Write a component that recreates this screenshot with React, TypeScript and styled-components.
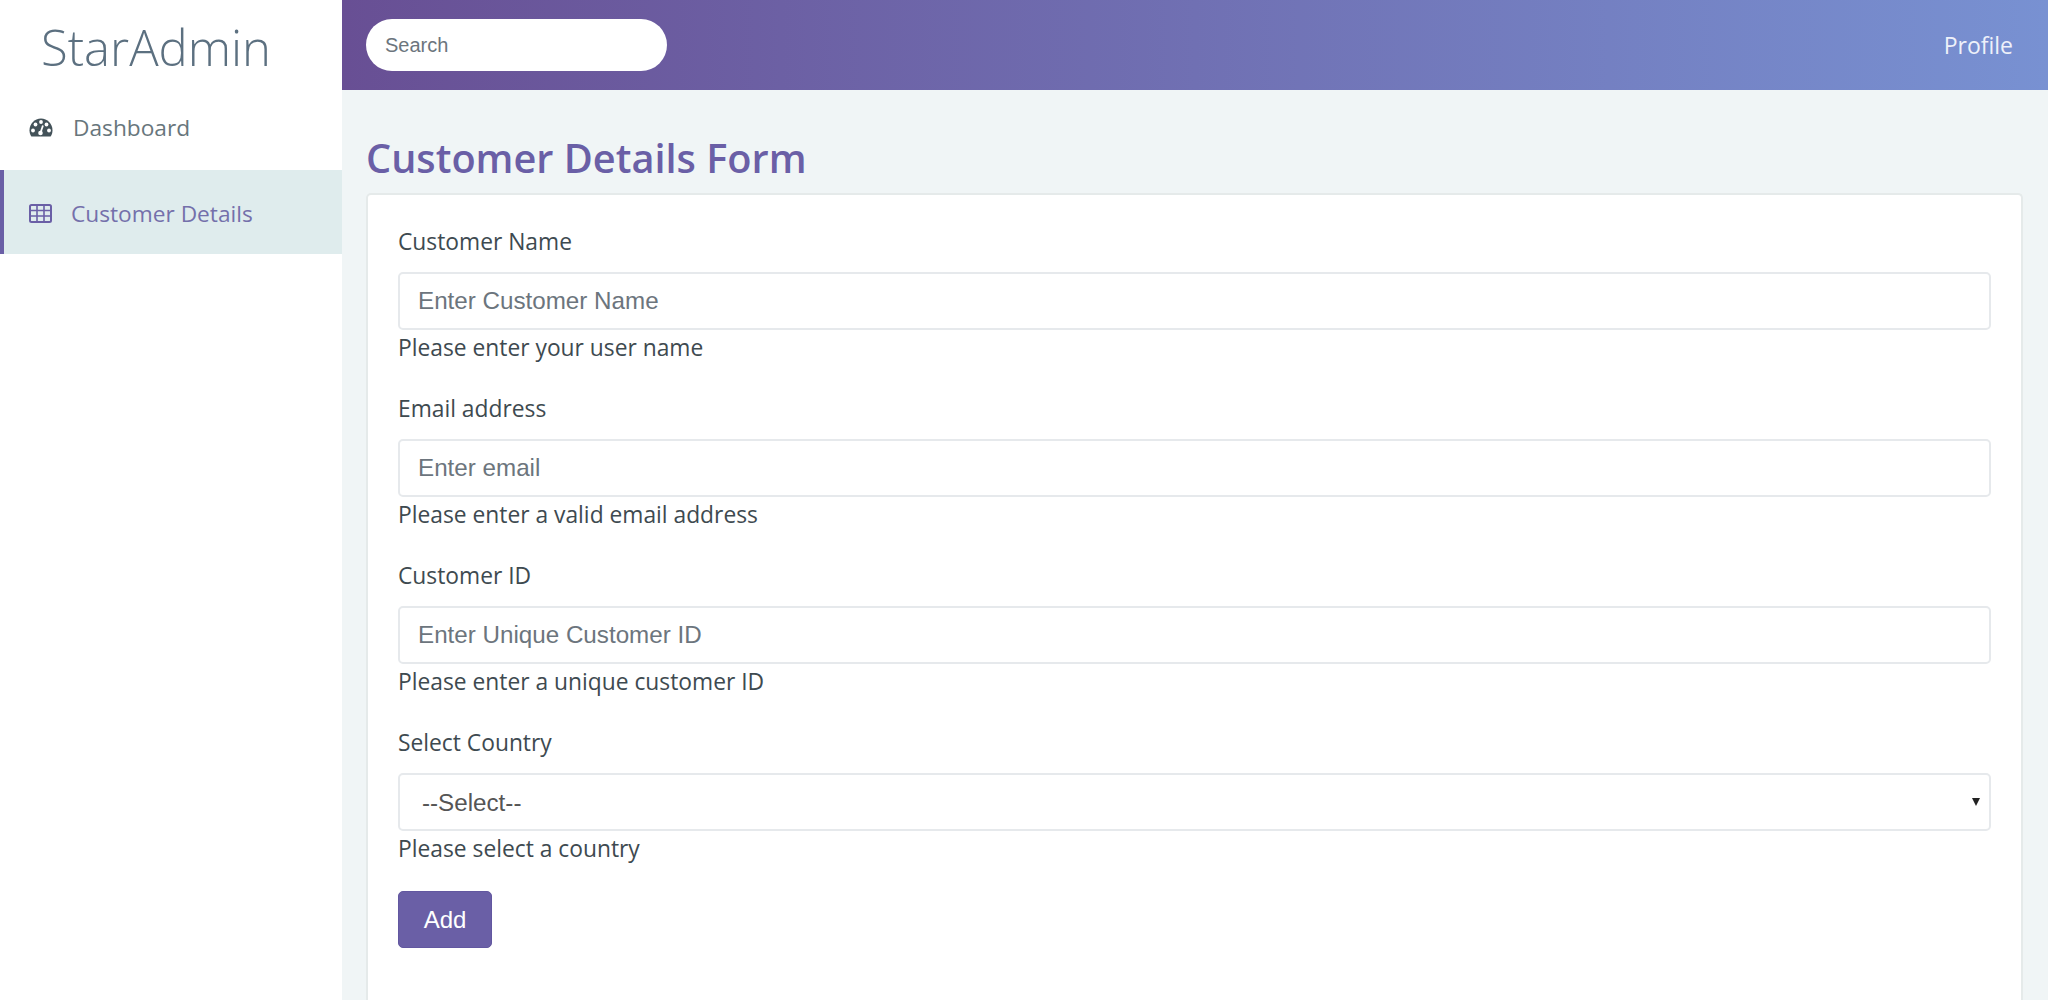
import styled, { createGlobalStyle } from 'styled-components';

const purple = '#6a5fa6';

const fields = [
    { label: 'Customer Name', placeholder: 'Enter Customer Name', help: 'Please enter your user name' },
    { label: 'Email address', placeholder: 'Enter email', help: 'Please enter a valid email address' },
    { label: 'Customer ID', placeholder: 'Enter Unique Customer ID', help: 'Please enter a unique customer ID' },
];

function GaugeIcon() {
    return (
        <svg width="24" height="19" viewBox="0 0 24 19">
            <path
                d="M12 0.5C5.6 0.5 0.5 5.7 0.5 12.2c0 2.4 0.7 4.6 1.9 6.3h19.2c1.2-1.7 1.9-3.9 1.9-6.3C23.5 5.7 18.4 0.5 12 0.5z"
                fill="#435259"
            />
            <g fill="#fff">
                <circle cx="4" cy="12.5" r="1.9" />
                <circle cx="6.5" cy="6.5" r="1.9" />
                <circle cx="12" cy="4" r="1.9" />
                <circle cx="17.5" cy="6.5" r="1.9" />
                <circle cx="20" cy="12.5" r="1.9" />
                <circle cx="11.5" cy="15" r="2.3" />
            </g>
            <path d="M11.5 15l2.4-7.5" stroke="#fff" strokeWidth="1.8" />
        </svg>
    );
}

function TableIcon() {
    return (
        <svg width="23" height="19" viewBox="0 0 23 19" fill="none" stroke="currentColor" strokeWidth="2">
            <rect x="1" y="1" width="21" height="17" rx="1.5" />
            <path d="M1 6.5h21M1 12h21M8 1v17M15 1v17" strokeWidth="1.6" />
        </svg>
    );
}

export default function App() {
    return (
        <>
            <GlobalStyle />
            <Page>
                <Sidebar>
                    <Brand>StarAdmin</Brand>
                    <NavItem>
                        <NavIcon>
                            <GaugeIcon />
                        </NavIcon>
                        Dashboard
                    </NavItem>
                    <NavItem active>
                        <NavIcon active>
                            <TableIcon />
                        </NavIcon>
                        Customer Details
                    </NavItem>
                </Sidebar>
                <Main>
                    <Header>
                        <Search placeholder="Search" />
                        <ProfileLink>Profile</ProfileLink>
                    </Header>
                    <Content>
                        <Title>Customer Details Form</Title>
                        <Card>
                            {fields.map((field) => (
                                <Field key={field.label}>
                                    <Label>{field.label}</Label>
                                    <Input placeholder={field.placeholder} />
                                    <Help>{field.help}</Help>
                                </Field>
                            ))}
                            <Field>
                                <Label>Select Country</Label>
                                <SelectWrap>
                                    <Select defaultValue="">
                                        <option value="">--Select--</option>
                                    </Select>
                                    <Caret />
                                </SelectWrap>
                                <Help>Please select a country</Help>
                            </Field>
                            <AddButton>Add</AddButton>
                        </Card>
                    </Content>
                </Main>
            </Page>
        </>
    );
}

const GlobalStyle = createGlobalStyle`
    html, body {
        margin: 0;
        height: 100%;
        overflow: hidden;
        background: #f0f5f6;
    }
`;

const Page = styled.div`
    display: grid;
    grid-template-columns: 342px 1fr;
    height: 1000px;
    overflow: hidden;
    font-family: 'Open Sans', sans-serif;
`;

const Sidebar = styled.aside`
    background: #fff;
    display: flex;
    flex-direction: column;
`;

const Brand = styled.div`
    height: 90px;
    box-sizing: border-box;
    padding: 14px 0 0 41px;
    font-size: 49px;
    font-weight: 300;
    line-height: 66px;
    color: #5c7080;
`;

const NavItem = styled.div<{ active?: boolean }>`
    height: ${({ active }) => (active ? '84px' : '80px')};
    box-sizing: border-box;
    display: flex;
    align-items: center;
    padding: ${({ active }) => (active ? '2px 0 0 25px' : '0 0 5px 29px')};
    border-left: ${({ active }) => (active ? `4px solid ${purple}` : 'none')};
    background: ${({ active }) => (active ? '#dfeced' : 'transparent')};
    color: ${({ active }) => (active ? '#7470ab' : '#68767c')};
    font-size: 22.7px;
`;

const NavIcon = styled.span<{ active?: boolean }>`
    display: inline-flex;
    width: ${({ active }) => (active ? '42px' : '44px')};
    color: ${({ active }) => (active ? purple : '#435259')};
`;

const Main = styled.main`
    display: flex;
    flex-direction: column;
    min-width: 0;
`;

const Header = styled.header`
    height: 90px;
    flex: none;
    box-sizing: border-box;
    display: flex;
    align-items: center;
    justify-content: space-between;
    padding: 0 35px 0 24px;
    background: linear-gradient(90deg, #684f94 0%, #7891d2 100%);
`;

const Search = styled.input`
    width: 301px;
    height: 52px;
    box-sizing: border-box;
    border: none;
    border-radius: 26px;
    padding: 0 19px;
    background: #fff;
    font-family: 'Liberation Sans', Arial, sans-serif;
    font-size: 20px;
    outline: none;

    &::placeholder {
        color: #6c757d;
        opacity: 1;
    }
`;

const ProfileLink = styled.a`
    color: #eef1fa;
    font-size: 23px;
    font-weight: 500;
`;

const Content = styled.div`
    flex: 1;
    min-height: 0;
    padding: 42px 25px 0 24px;
    display: flex;
    flex-direction: column;
`;

const Title = styled.h1`
    margin: 0 0 9px;
    color: ${purple};
    font-size: 39.7px;
    font-weight: 600;
    line-height: 52px;
`;

const Card = styled.section`
    background: #fff;
    border: 2px solid #e5eaea;
    border-bottom: none;
    border-radius: 5px 5px 0 0;
    padding: 32px 30px 0;
    flex: 1;
`;

const Field = styled.div`
    display: flex;
    flex-direction: column;

    & + & {
        margin-top: 31px;
    }
`;

const Label = styled.label`
    color: #3e4a50;
    font-size: 22.8px;
    line-height: 30px;
    margin-bottom: 15px;
`;

const Input = styled.input`
    height: 58px;
    box-sizing: border-box;
    border: 2px solid #e6e9ec;
    border-radius: 5px;
    padding: 0 18px;
    background: #fff;
    font-family: 'Liberation Sans', Arial, sans-serif;
    font-size: 24.2px;
    outline: none;

    &::placeholder {
        color: #6c757d;
        opacity: 1;
    }
`;

const SelectWrap = styled.div`
    position: relative;
    display: flex;
`;

const Select = styled.select`
    flex: 1;
    height: 58px;
    box-sizing: border-box;
    appearance: none;
    border: 2px solid #e6e9ec;
    border-radius: 5px;
    padding: 0 22px;
    background: #fff;
    color: #555;
    font-family: 'Liberation Sans', Arial, sans-serif;
    font-size: 24.2px;
    outline: none;
`;

const Caret = styled.span`
    position: absolute;
    top: 25px;
    right: 11px;
    width: 0;
    height: 0;
    border-left: 4.5px solid transparent;
    border-right: 4.5px solid transparent;
    border-top: 8px solid #222;
    pointer-events: none;
`;

const Help = styled.small`
    color: #3e4a50;
    font-size: 22.8px;
    line-height: 30px;
    margin-top: 3px;
`;

const AddButton = styled.button`
    display: block;
    width: 94px;
    height: 57px;
    margin-top: 27px;
    border: 1px solid #6257a0;
    border-radius: 5px;
    background: ${purple};
    color: #fff;
    font-family: 'Liberation Sans', Arial, sans-serif;
    font-size: 24px;
`;
